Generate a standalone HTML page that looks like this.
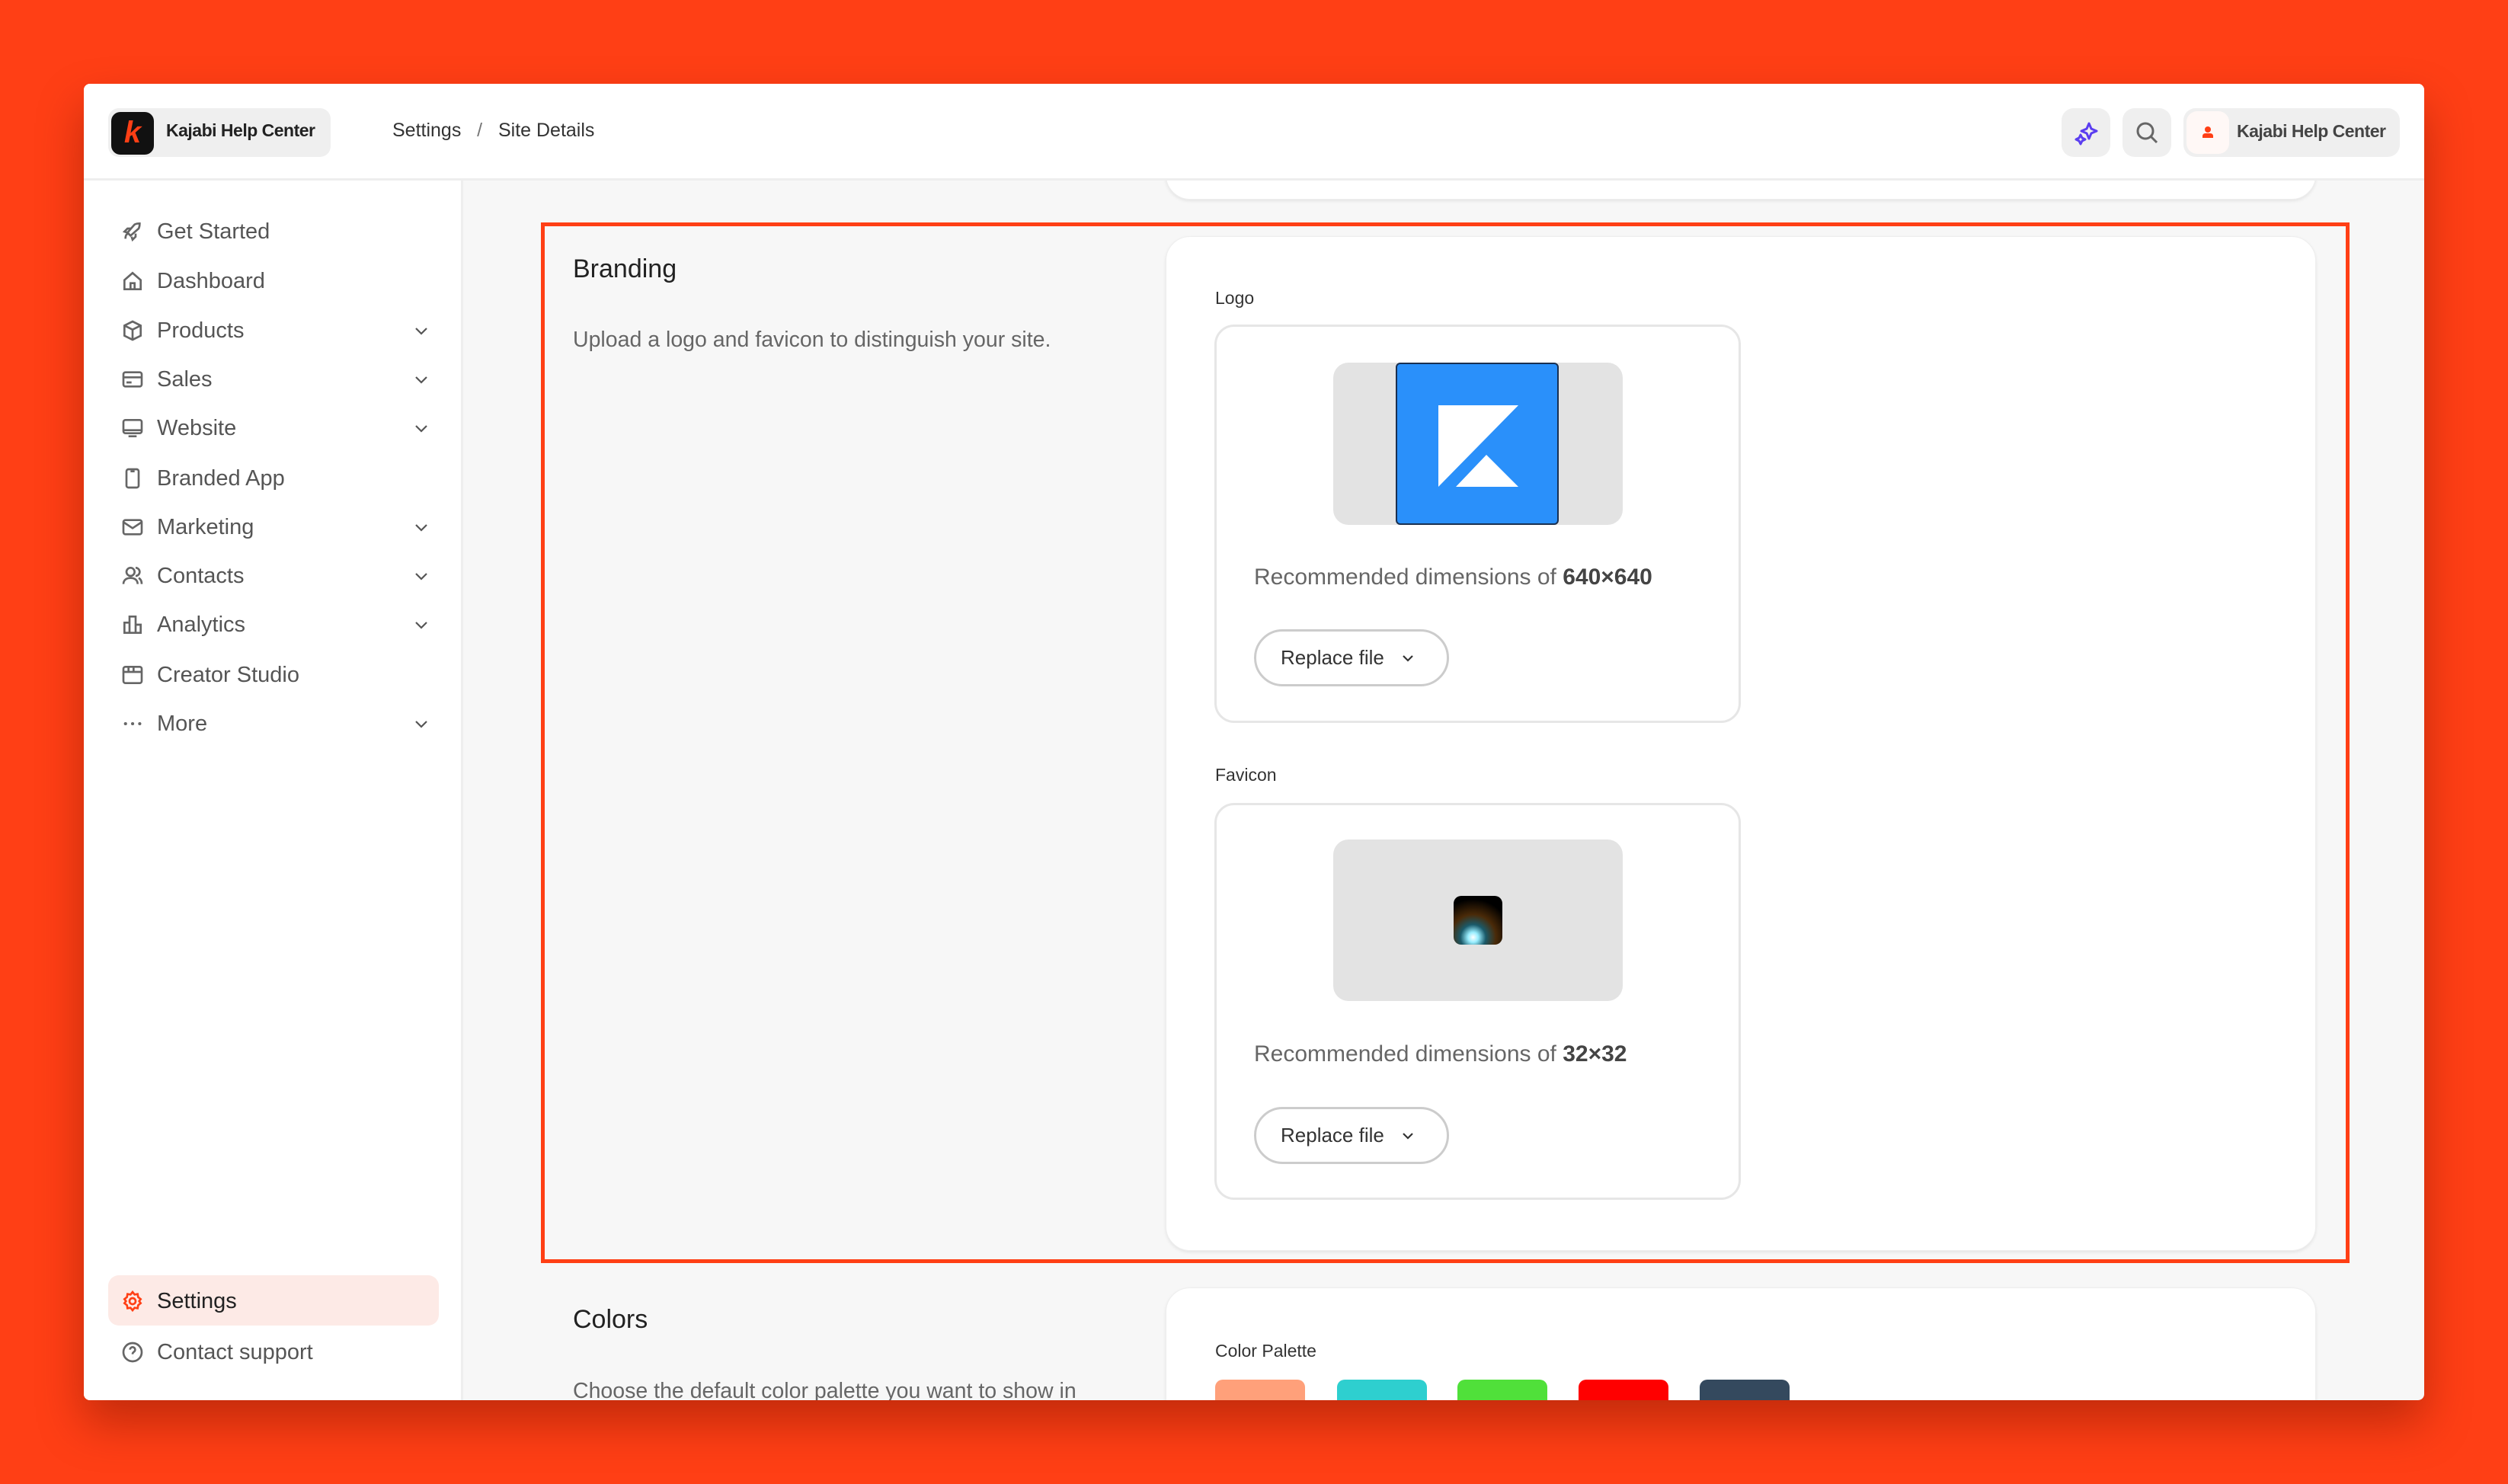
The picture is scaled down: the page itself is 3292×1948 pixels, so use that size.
<!DOCTYPE html>
<html><head><meta charset="utf-8"><style>
*{margin:0;padding:0;box-sizing:border-box}
body{width:3292px;height:1948px;background:#ff3f15;font-family:"Liberation Sans",sans-serif;position:relative;overflow:hidden}
.a{position:absolute}
.win{left:110px;top:110px;width:3072px;height:1728px;background:#f7f7f7;border-radius:8px;overflow:hidden;box-shadow:0 30px 60px rgba(120,20,0,.45)}
.hdr{left:0;top:0;width:3072px;height:127px;background:#fff;border-bottom:3px solid #eee;z-index:5}
.side{left:0;top:127px;width:498px;height:1601px;background:#fff;border-right:3px solid #eee;z-index:4}
.item{position:absolute;left:48px;height:40px;display:flex;align-items:center;font-size:29px;color:#555}
.item svg{width:32px;height:32px;margin-right:16px;fill:none;stroke:#666;stroke-width:2}
.chev{position:absolute;left:432px;width:22px;height:22px}
.card{background:#fff;border-radius:32px;box-shadow:0 2px 4px rgba(0,0,0,.08);border:1px solid #eee}
.box{border:3px solid #e6e6e6;border-radius:26px;background:#fff}
.btn{border:3px solid #ccc;border-radius:40px;background:#fff;font-size:26px;color:#333;display:flex;align-items:center;padding-left:32px}
.rec{font-size:30px;color:#666}
.rec b{color:#444}
</style></head><body>
<div class="a win">
 <div class="a hdr">
  <div class="a" style="left:32px;top:32px;width:292px;height:64px;background:#efefef;border-radius:14px"></div>
  <div class="a" style="left:36px;top:37px;width:56px;height:56px;background:#111;border-radius:12px;color:#ff3f15;font-weight:bold;font-style:italic;font-size:40px;text-align:center;line-height:54px">k</div>
  <div class="a" style="left:108px;top:48px;font-size:23px;font-weight:bold;color:#222;letter-spacing:-0.5px">Kajabi Help Center</div>
  <div class="a" style="left:405px;top:47px;font-size:25px;color:#333">Settings &nbsp; <span style="color:#777">/</span> &nbsp; Site Details</div>
  <div class="a" style="left:2596px;top:32px;width:64px;height:64px;background:#efefef;border-radius:16px">
   <svg width="64" height="64" viewBox="0 0 64 64" fill="none" stroke="#5b3ef0" stroke-width="3" stroke-linejoin="round"><path d="M36 20 L39 27 L46 30 L39 33 L36 40 L33 33 L26 30 L33 27Z"/><path d="M25 35 L27 39 L31 41 L27 43 L25 47 L23 43 L19 41 L23 39Z"/></svg>
  </div>
  <div class="a" style="left:2676px;top:32px;width:64px;height:64px;background:#efefef;border-radius:16px">
   <svg width="64" height="64" viewBox="0 0 64 64" fill="none" stroke="#666" stroke-width="3"><circle cx="30" cy="30" r="10"/><path d="M37 37 L45 45"/></svg>
  </div>
  <div class="a" style="left:2756px;top:32px;width:284px;height:64px;background:#efefef;border-radius:16px">
   <div class="a" style="left:4px;top:4px;width:56px;height:56px;background:#fff8f6;border-radius:14px">
    <svg width="56" height="56" viewBox="0 0 56 56" fill="#ff3f15"><circle cx="28" cy="24" r="4"/><path d="M21 33 Q21 29 25 29 L31 29 Q35 29 35 33 L35 35 L21 35Z"/></svg>
   </div>
   <div class="a" style="left:70px;top:17px;font-size:23px;font-weight:bold;color:#444;letter-spacing:-0.5px">Kajabi Help Center</div>
  </div>
 </div>
 <div class="a side">
  <div class="item" style="top:47px"><svg viewBox="0 0 24 24"><path d="M5 19c0-3 1-5 3-5M9 15l-2-2 7-8c2-1 4-1 5-1 0 1 0 3-1 5l-8 7zM7 13l-3-1 3-3h3M11 17l1 3 3-3v-3"/></svg>Get Started</div>
  <div class="item" style="top:112px"><svg viewBox="0 0 24 24"><path d="M4 11l8-7 8 7v9H4zM10 20v-6h4v6"/></svg>Dashboard</div>
  <div class="item" style="top:177px"><svg viewBox="0 0 24 24"><path d="M12 3l8 4v10l-8 4-8-4V7zM4 7l8 4 8-4M12 11v10"/></svg>Products</div>
  <div class="item" style="top:241px"><svg viewBox="0 0 24 24"><rect x="3" y="5" width="18" height="14" rx="2"/><path d="M3 10h18M6 15h5"/></svg>Sales</div>
  <div class="item" style="top:305px"><svg viewBox="0 0 24 24"><rect x="3" y="4" width="18" height="13" rx="2"/><path d="M3 14h18M8 20h8"/></svg>Website</div>
  <div class="item" style="top:371px"><svg viewBox="0 0 24 24"><rect x="6" y="3" width="12" height="18" rx="2"/><path d="M10 5h4"/></svg>Branded App</div>
  <div class="item" style="top:435px"><svg viewBox="0 0 24 24"><rect x="3" y="5" width="18" height="14" rx="2"/><path d="M3 7l9 6 9-6"/></svg>Marketing</div>
  <div class="item" style="top:499px"><svg viewBox="0 0 24 24"><circle cx="10" cy="8" r="4"/><path d="M3 20c0-4 3-6 7-6s7 2 7 6M15 4a4 4 0 010 8M18 14c2 1 3 3 3 6"/></svg>Contacts</div>
  <div class="item" style="top:563px"><svg viewBox="0 0 24 24"><path d="M4 20V10h5v10M9 20V4h6v16M15 20v-8h5v8M3 20h18"/></svg>Analytics</div>
  <div class="item" style="top:629px"><svg viewBox="0 0 24 24"><rect x="3" y="4" width="18" height="16" rx="2"/><path d="M3 9h18M8 4v5M13 4v5"/></svg>Creator Studio</div>
  <div class="item" style="top:693px"><svg viewBox="0 0 24 24" style="stroke-width:3;stroke-linecap:round"><path d="M5 12h.1M12 12h.1M19 12h.1"/></svg>More</div>
  <svg class="chev" style="top:186px" viewBox="0 0 22 22" fill="none" stroke="#555" stroke-width="2.2"><path d="M4 8l7 7 7-7"/></svg>
  <svg class="chev" style="top:250px" viewBox="0 0 22 22" fill="none" stroke="#555" stroke-width="2.2"><path d="M4 8l7 7 7-7"/></svg>
  <svg class="chev" style="top:314px" viewBox="0 0 22 22" fill="none" stroke="#555" stroke-width="2.2"><path d="M4 8l7 7 7-7"/></svg>
  <svg class="chev" style="top:444px" viewBox="0 0 22 22" fill="none" stroke="#555" stroke-width="2.2"><path d="M4 8l7 7 7-7"/></svg>
  <svg class="chev" style="top:508px" viewBox="0 0 22 22" fill="none" stroke="#555" stroke-width="2.2"><path d="M4 8l7 7 7-7"/></svg>
  <svg class="chev" style="top:572px" viewBox="0 0 22 22" fill="none" stroke="#555" stroke-width="2.2"><path d="M4 8l7 7 7-7"/></svg>
  <svg class="chev" style="top:702px" viewBox="0 0 22 22" fill="none" stroke="#555" stroke-width="2.2"><path d="M4 8l7 7 7-7"/></svg>
  <div class="a" style="left:32px;top:1437px;width:434px;height:66px;background:#fdeae6;border-radius:14px"></div>
  <div class="item" style="top:1451px;color:#222"><svg viewBox="0 0 24 24" style="stroke:#ff3f15"><circle cx="12" cy="12" r="3"/><path d="M12 3l2 2.5 3-.5.5 3 2.5 2-1.5 2 1.5 2-2.5 2-.5 3-3-.5L12 21l-2-2.5-3 .5-.5-3L4 14l1.5-2L4 10l2.5-2 .5-3 3 .5z"/></svg>Settings</div>
  <div class="item" style="top:1518px"><svg viewBox="0 0 24 24"><circle cx="12" cy="12" r="9"/><path d="M9.5 9.5a2.5 2.5 0 114 2c-1 .7-1.5 1.2-1.5 2.5M12 17h.1"/></svg>Contact support</div>
 </div>
 <div class="a card" style="left:1420px;top:60px;width:1510px;height:92px"></div>
 <div class="a card" style="left:1420px;top:200px;width:1510px;height:1332px"></div>
 <div class="a" style="left:600px;top:182px;width:2374px;height:1366px;border:5px solid #ff3f15"></div>
 <div class="a" style="left:642px;top:224px;font-size:34px;color:#222">Branding</div>
 <div class="a" style="left:642px;top:320px;font-size:28.5px;color:#666">Upload a logo and favicon to distinguish your site.</div>
 <div class="a" style="left:1485px;top:268px;font-size:23px;color:#333">Logo</div>
 <div class="a box" style="left:1484px;top:316px;width:691px;height:523px"></div>
 <div class="a" style="left:1640px;top:366px;width:380px;height:213px;background:#e3e3e3;border-radius:20px"></div>
 <div class="a" style="left:1722px;top:366px;width:214px;height:213px;background:#2a90fa;border:2px solid #1a3050;border-radius:6px">
  <svg width="210" height="209" viewBox="0 0 210 209"><path d="M54 54 L159 54 L54 161Z" fill="#fff"/><path d="M117 119 L159 161 L77 161Z" fill="#fff"/></svg>
 </div>
 <div class="a rec" style="left:1536px;top:631px">Recommended dimensions of <b>640×640</b></div>
 <div class="a btn" style="left:1536px;top:716px;width:256px;height:75px">Replace file
  <svg width="22" height="22" viewBox="0 0 22 22" fill="none" stroke="#333" stroke-width="2.2" style="margin-left:20px"><path d="M5 8l6 6 6-6"/></svg></div>
 <div class="a" style="left:1485px;top:894px;font-size:23px;color:#333">Favicon</div>
 <div class="a box" style="left:1484px;top:944px;width:691px;height:521px"></div>
 <div class="a" style="left:1640px;top:992px;width:380px;height:212px;background:#e3e3e3;border-radius:20px"></div>
 <div class="a" style="left:1798px;top:1066px;width:64px;height:64px;border-radius:10px;background:radial-gradient(circle at 40% 85%,#fff 0,#9ef 10%,#1a5a6a 25%,#4a2a08 45%,#000 75%)"></div>
 <div class="a rec" style="left:1536px;top:1257px">Recommended dimensions of <b>32×32</b></div>
 <div class="a btn" style="left:1536px;top:1343px;width:256px;height:75px">Replace file
  <svg width="22" height="22" viewBox="0 0 22 22" fill="none" stroke="#333" stroke-width="2.2" style="margin-left:20px"><path d="M5 8l6 6 6-6"/></svg></div>
 <div class="a card" style="left:1420px;top:1580px;width:1510px;height:300px"></div>
 <div class="a" style="left:642px;top:1603px;font-size:34px;color:#222">Colors</div>
 <div class="a" style="left:642px;top:1700px;font-size:28.5px;color:#666">Choose the default color palette you want to show in</div>
 <div class="a" style="left:1485px;top:1650px;font-size:23px;color:#333">Color Palette</div>
 <div class="a" style="left:1485px;top:1701px;width:118px;height:60px;background:#ffa07a;border-radius:10px"></div>
 <div class="a" style="left:1645px;top:1701px;width:118px;height:60px;background:#2ecfcf;border-radius:10px"></div>
 <div class="a" style="left:1803px;top:1701px;width:118px;height:60px;background:#50e03a;border-radius:10px"></div>
 <div class="a" style="left:1962px;top:1701px;width:118px;height:60px;background:#ff0000;border-radius:10px"></div>
 <div class="a" style="left:2121px;top:1701px;width:118px;height:60px;background:#34495e;border-radius:10px"></div>
</div>
</body></html>
